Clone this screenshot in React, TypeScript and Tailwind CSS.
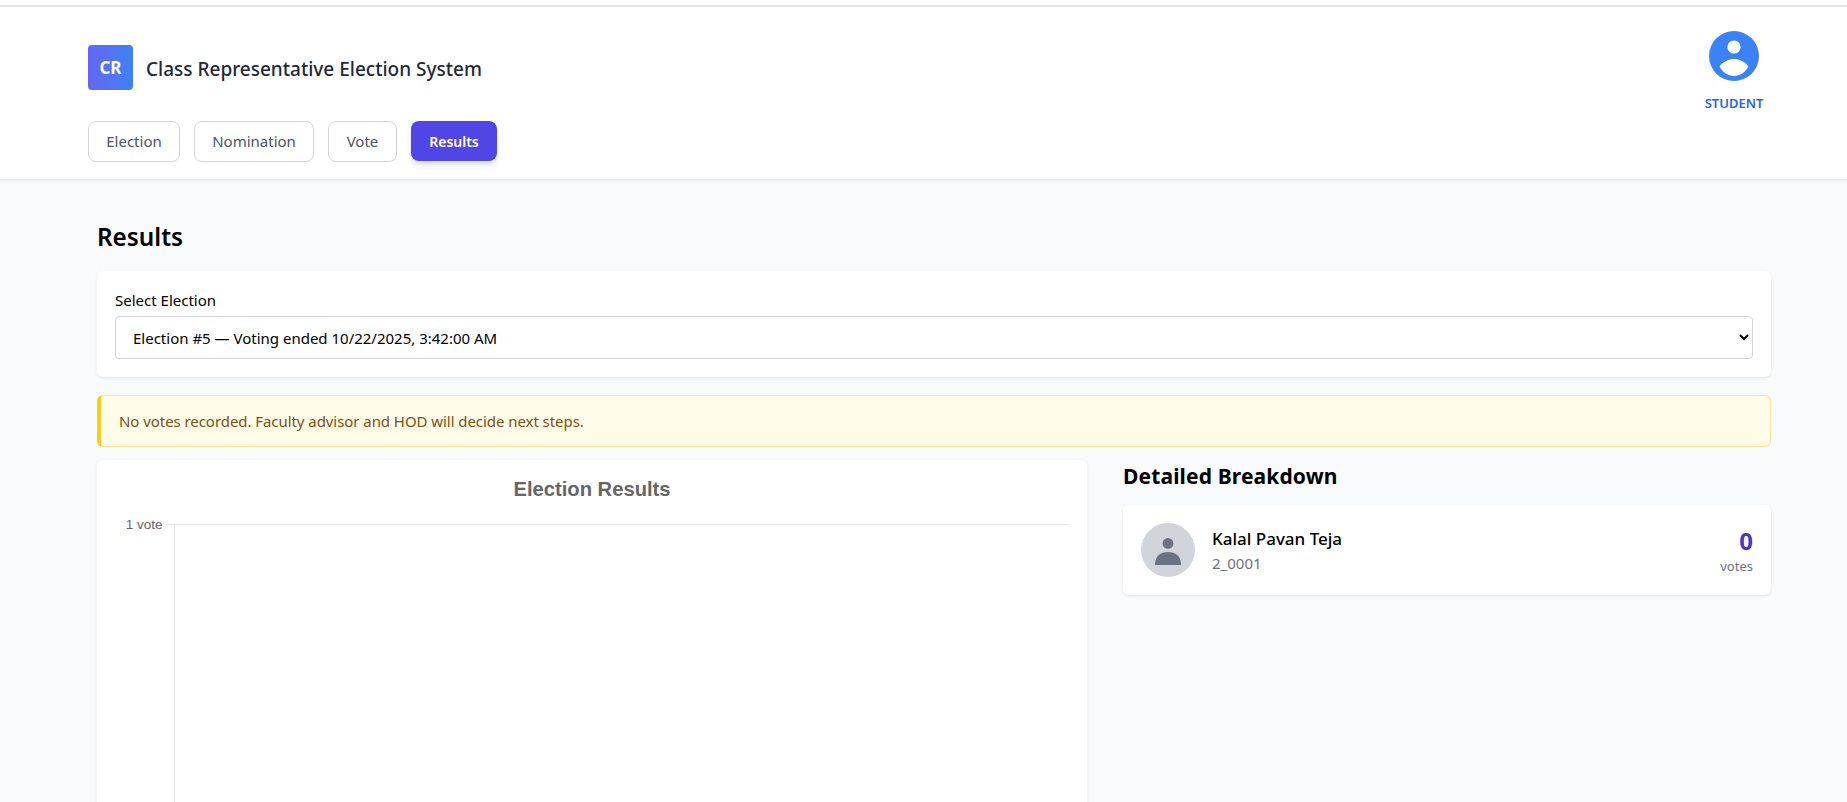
import React from 'react';

const tabs = [
  { label: 'Election', width: 'w-[92px]' },
  { label: 'Nomination', width: 'w-[120px]' },
  { label: 'Vote', width: 'w-[69px]' },
];

const App: React.FC = () => {
  return (
    <div className="h-screen overflow-hidden bg-[#f9fafb] font-['Noto_Sans',sans-serif] text-black">
      <div className="h-[5px] bg-white" />
      <header className="h-[175px] border-t-2 border-b border-t-[#e2e4e7] border-b-[#e5e7eb] bg-white pl-[88px] pr-[83px] shadow-[0_1px_2px_rgba(0,0,0,0.05)]">
        <div className="flex items-start justify-between">
          <div>
            <div className="mt-[38px] flex items-center">
              <div className="flex h-[45px] w-[45px] items-center justify-center rounded-[4px] bg-gradient-to-r from-[#6366f1] to-[#3b82f6] text-[17px] font-bold text-white">
                CR
              </div>
              <h1 className="mt-[4px] ml-[13px] text-[19px] font-medium text-[#1f2937]">
                Class Representative Election System
              </h1>
            </div>
            <nav className="mt-[31px] flex gap-[14px]">
              {tabs.map((tab) => (
                <button
                  key={tab.label}
                  className={`h-[41px] ${tab.width} rounded-[8px] border border-[#d1d5db] bg-white text-[15px] text-[#4b5563]`}
                >
                  {tab.label}
                </button>
              ))}
              <button className="h-[40px] w-[86px] rounded-[8px] bg-[#4f46e5] text-[14px] font-semibold text-white shadow-[0_4px_6px_-1px_rgba(79,70,229,0.25)]">
                Results
              </button>
            </nav>
          </div>
          <div className="mt-[24px] flex w-[60px] flex-col items-center">
            <svg viewBox="0 0 50 50" className="h-[50px] w-[50px]">
              <circle cx="25" cy="25" r="25" fill="#3b82f6" />
              <circle cx="25" cy="16" r="6.6" fill="#fff" />
              <path d="M10.5 35.5C14 30.5 20 28 25 28S36 30.5 39.5 35.5C36 41.5 31 45 25 45S14 41.5 10.5 35.5Z" fill="#fff" />
            </svg>
            <span className="mt-[14px] text-[13px] leading-[16px] font-semibold whitespace-nowrap text-[#2563eb]">STUDENT</span>
          </div>
        </div>
      </header>

      <main className="pl-[97px] pr-[76px]">
        <h2 className="mt-[41px] text-[24.3px] leading-[32px] font-semibold">Results</h2>

        <section className="mt-[18px] h-[106px] rounded-[6px] bg-white px-[18px] pt-[19px] shadow-[0_1px_3px_rgba(0,0,0,0.1)]">
          <label className="block text-[15px] leading-[20px]">Select Election</label>
          <select className="mt-[6px] h-[43px] w-full rounded-[4px] border border-[#d1d5db] bg-white pl-[13px] pr-1 text-[15px]">
            <option>Election #5 — Voting ended 10/22/2025, 3:42:00 AM</option>
          </select>
        </section>

        <div className="mt-[18px] flex h-[52px] items-center rounded-[6px] border border-l-4 border-[#fde68a] border-l-[#facc15] bg-[#fefce8] pl-[18px] text-[15px] tracking-[-0.06px] text-[#854d0e]">
          No votes recorded. Faculty advisor and HOD will decide next steps.
        </div>

        <div className="mt-[13px] flex gap-[36px]">
          <section className="h-[400px] w-[990px] shrink-0 rounded-[6px] bg-white shadow-[0_1px_3px_rgba(0,0,0,0.1)]">
            <svg viewBox="0 0 990 400" className="h-[400px] w-[990px]">
              <text x="495" y="36" textAnchor="middle" fontFamily="Liberation Sans" fontSize="20.2" fontWeight="700" fill="#666">
                Election Results
              </text>
              <text x="65.5" y="69" textAnchor="end" fontFamily="Liberation Sans" fontSize="13.5" fill="#666">
                1 vote
              </text>
              <path d="M69 64.5H972M77.5 64.5V400" stroke="#e5e5e5" fill="none" />
            </svg>
          </section>

          <aside className="flex-1">
            <h3 className="mt-[2px] text-[21px] leading-[28px] font-bold tracking-[0.14px]">Detailed Breakdown</h3>
            <div className="mt-[15px] flex h-[90px] items-center rounded-[6px] bg-white px-[18px] shadow-[0_1px_3px_rgba(0,0,0,0.1)]">
              <div className="flex h-[54px] w-[54px] items-center justify-center rounded-full bg-[#d1d5db]">
                <svg viewBox="0 0 26 27" className="mt-[3px] h-[27px] w-[26px]" fill="#6b7280">
                  <circle cx="13" cy="5.4" r="5.4" />
                  <path d="M0 27C0 18 5 14 13 14S26 18 26 27Z" />
                </svg>
              </div>
              <div className="ml-[17px] flex-1">
                <div className="text-[17px] leading-[24px] font-medium">Kalal Pavan Teja</div>
                <div className="mt-[2px] text-[15px] leading-[20px] text-[#6b7280]">2_0001</div>
              </div>
              <div className="text-right">
                <div className="text-[24px] leading-[28px] font-bold text-[#4338ca]">0</div>
                <div className="mt-[3px] text-[13px] leading-[16px] text-[#6b7280]">votes</div>
              </div>
            </div>
          </aside>
        </div>
      </main>
    </div>
  );
};

export default App;
